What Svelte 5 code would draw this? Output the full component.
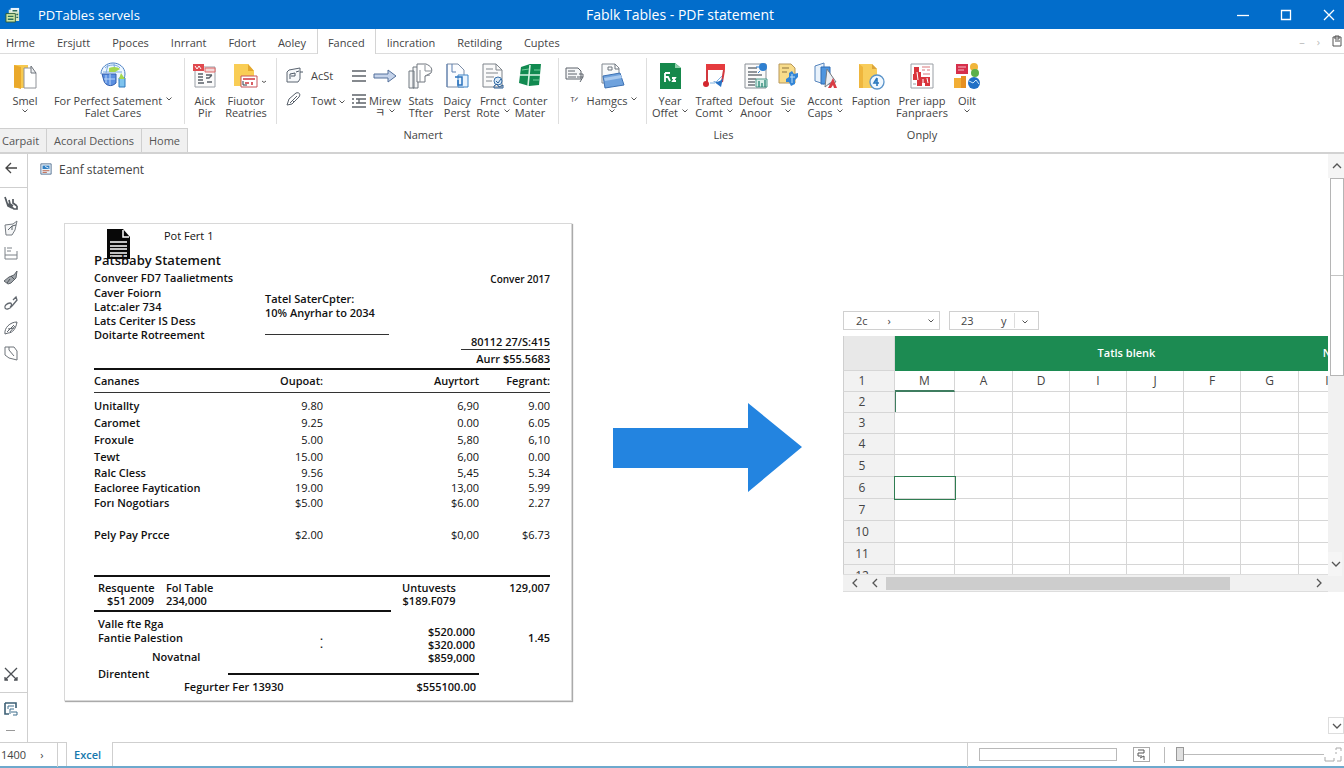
<script>
  const tabs = [
    "Hrme", "Ersjutt", "Ppoces", "Inrrant", "Fdort", "Aoley",
    "Fanced", "Iincration", "Retilding", "Cuptes",
  ];
  let activeTab = $state("Fanced");

  const icons = {
    app: `<path d="M4 3h9l2 2v10H4z" fill="#d9e8c8"/><path d="M6 1h9v4H6z" fill="#eaf4fb"/><path d="M1 7h10v9H1z" fill="#cfe6a4" stroke="#2b5b3c"/><path d="M3 10h6M3 13h6M8 4h5M12 8h2M12 11h2" stroke="#2d6f5a" stroke-width="1.4"/>`,
    folderPage: `<path d="M3 3h14v23H3z" fill="#f7c94f"/><path d="M3 3l7 2v22l-7-2z" fill="#eaa92b"/><path d="M13 6h7l5 5v15H13z" fill="#fff" stroke="#8f9298"/><path d="M20 4l5 7h-5z" fill="#eef0f2" stroke="#6f747c"/>`,
    cloud: `<path d="M2 12C2 5 8 1 14 1s12 4 12 11c0 4-2 7-4 8" fill="#eef7ff" stroke="#4a7fc4"/><path d="M6 6c4-4 12-4 15 0M4 10h19M9 3l-2 8M15 2l1 8" fill="none" stroke="#7dabde"/><path d="M10 6c5-2 9-1 11 1l-5 3h-6z" fill="#a4d84e"/><path d="M3 12h14v9c-5 5-11 2-12-2z" fill="#5b8fe0" stroke="#345fae"/><path d="M7 13v8M11 12v11M5 17h11" stroke="#b9d5f7"/><path d="M20 16h6v9h-6z" fill="#7ec3ee" stroke="#2e78bd"/><path d="M22 11l4 6h-6z" fill="#a4d84e"/>`,
    calendar: `<path d="M4 5h20v20H4z" fill="#fbfbfb" stroke="#999fa7"/><path d="M2 2h11v7H2z" fill="#e04a4f"/><path d="M4 4l2 3 2-3 2 3" stroke="#fff" fill="none"/><path d="M14 6h10v4H14z" fill="#f4d8d8" stroke="#d66"/><path d="M7 12h5M7 15h5M7 18h5M7 21h6M15 13h6M15 16h3l3-3M16 20h5" stroke="#5a6068" fill="none" stroke-width="1.3"/>`,
    folderCard: `<path d="M2 2h14l6 7v15H2z" fill="#f9cd55"/><path d="M16 2v7h6z" fill="#e3a72e"/><path d="M9 14h16v11H9z" fill="#fff" stroke="#c7555b"/><path d="M11 17h12M13 21h4M20 20v3" stroke="#d0363e" stroke-width="1.6"/><path d="M11 19v4h4" fill="none" stroke="#333c48"/><path d="M30 19l2 1.500 2-1.500" fill="none" stroke="#555"/>`,
    stamp: `<path d="M4 4l11-2v11l-2 3H2V6z" fill="#f6f8fa" stroke="#5b6470"/><path d="M5 13V8l5-1v3H6M11 6l3-1M15 6h3" fill="none" stroke="#4c5866"/>`,
    clip: `<path d="M2 14l2-6 7-6c3-1 5 1 3 4l-7 7-5 1zM5 12l7-7M7 9l2 2" fill="none" stroke="#59616b"/>`,
    lines: `<path d="M1 4h14M1 9h14M1 14h14" stroke="#5d6369" stroke-width="1.300"/>`,
    list: `<path d="M1 3h14M5 7h10M5 11h10M1 15h14M1 7h2M1 11h2M8 7v4" stroke="#5d6369" stroke-width="1.300"/>`,
    arrow: `<path d="M3 12h14V8l8 6-8 6v-4H3z" fill="#c5d3ea" stroke="#54709b"/>`,
    pages: `<path d="M2 9h5v17H2zM6 5h5v21H6z" fill="#f5f6f7" stroke="#717880"/><path d="M10 2h9c5 2 7 5 5 9l-6 3v6h-8z" fill="#fff" stroke="#70767e"/><path d="M18 3v6h7M18 14l5-1M13 20V8" fill="none" stroke="#8b9198"/>`,
    pageBlue: `<path d="M4 2h11l6 6v17H4z" fill="#fbfcfe" stroke="#7a8ca6"/><path d="M4 2v23M9 2v8h4" stroke="#5b7fb0" fill="none"/><path d="M15 13h10v12H15z" fill="#eaf4fd" stroke="#3c83c6"/><path d="M12 15h7v8h-4v-5" fill="none" stroke="#2a72bd" stroke-width="1.500"/>`,
    pageSeal: `<path d="M4 2h13l6 6v17H4z" fill="#fafafa" stroke="#7e848b"/><path d="M17 2v6h6M7 7h7M7 11h12M7 15h8M7 19h6" fill="none" stroke="#81878d"/><circle cx="19" cy="19" r="4" fill="#d7e9f8" stroke="#376fa9"/><path d="M15 24l3-2 2 3 4-2v3h-9zM17 19l2 2 3-4" fill="none" stroke="#2b5f98"/>`,
    flag: `<path d="M5 5l9-3h11l-2 21-10 1-10-3z" fill="#118a50"/><path d="M14 3l-2 21M4 13h20" stroke="#d6f3e2" stroke-width="1.600"/><path d="M18 8h6M17 18h6M6 8l7-1" stroke="#6fd09b"/>`,
    note: `<path d="M1 3h12l3 3v8H1z" fill="#f6f7f8" stroke="#5c636b"/><path d="M3 6h7M3 9h9M3 12h8M14 9h4v3l-3 5M12 12h6" stroke="#5c636b" fill="none"/>`,
    bluePage: `<path d="M4 2h13l4 4v15H4z" fill="#f9fafb" stroke="#80878f"/><path d="M10 5h4v3h-4zM17 2v5h4" fill="none" stroke="#6d747c"/><path d="M5 14l17-3 4 12-19 3z" fill="#6fa2dd" stroke="#3e72b4"/><path d="M6 16l17-3 1 3-17 3z" fill="#a9c9ee"/>`,
    excel: `<path d="M4 1h15l6 5v21H4z" fill="#15884b"/><path d="M19 1v5h6z" fill="#8fd0aa"/><path d="M9 11v9M9 11h5M9 15h3l2 4M16 16h3l-2 3h3" fill="none" stroke="#fff" stroke-width="1.800"/>`,
    music: `<path d="M6 2h19v6H6z" fill="#e53b3e"/><path d="M7 8v13M24 8l-2 12" stroke="#d2383e" stroke-width="2"/><circle cx="6" cy="22" r="3" fill="#d3262e"/><path d="M13 19c4 2 8 0 10-3l-2 9z" fill="#2872c5"/><path d="M10 21h5l7-7" fill="none" stroke="#7fb3e2"/>`,
    report: `<path d="M3 2h21v24H3z" fill="#fafafa" stroke="#8a9097"/><path d="M6 6h9M6 10h9M6 13h14M6 17h8M6 20h7M6 23h7" stroke="#6d747b" stroke-width="1.300"/><circle cx="21" cy="5" r="4" fill="#2e7fd0"/><path d="M17 5h-3M18 9l-2 2" stroke="#2e7fd0"/><path d="M14 17h11v8H14z" fill="#d9eee8" stroke="#4c9a8c"/><path d="M17 25v-6M20 25v-4M23 25v-7" stroke="#2f8c7a" stroke-width="1.400"/>`,
    globeDoc: `<path d="M5 2h12l4 4v15H5z" fill="#f8dc8a" stroke="#b7975a"/><path d="M8 6h7M8 10h5" stroke="#8b7340"/><path d="M15 11l3-2 2 3 4-1v4l-3 3v4l-4 2-2-4h-3v-3l3-2z" fill="#3385d6"/><path d="M16 15h5M18 12v9" stroke="#bfe0f8"/>`,
    cursor: `<path d="M4 4l9-3v21l-9-3z" fill="#e9f2fb" stroke="#5685bd"/><path d="M10 5h9v17h-9z" fill="#4e95df" stroke="#2f6db4"/><path d="M16 7l9 13-6 1-5 4z" fill="#eceff3" stroke="#747b83"/><path d="M17 26l5-10 4 10h-3l-1-3-2 3z" fill="#d93c44"/>`,
    folderClock: `<path d="M2 2h13l5 5v19H2z" fill="#f8cd5c"/><path d="M15 2v5h5z" fill="#dca53a"/><path d="M2 2l4 3v21H2z" fill="#efb63d"/><circle cx="20" cy="20" r="7" fill="#f1f8fe" stroke="#5a93c9" stroke-width="1.300"/><path d="M20 16l-3 5h5M20 16v8" stroke="#2b78bd" fill="none" stroke-width="1.600"/>`,
    redReport: `<path d="M3 2h22v24H3z" fill="#fff" stroke="#9a9fa5"/><path d="M6 5h5v5h2v5h9v9h-5v-3h-3v3H9v-6H5v-6h1z" fill="#d9343c"/><path d="M14 5h8M14 8h3M19 8h3M15 12h7" stroke="#db767b"/><path d="M9 10l1 8M15 17v5M19 16l1 5" stroke="#fff"/><path d="M5 22h3" stroke="#9a9fa5"/>`,
    tiles: `<path d="M3 2h12v10H3z" fill="#d62f4b"/><path d="M5 5h8M5 8h6" stroke="#f6bcc6"/><circle cx="21" cy="5" r="4" fill="#f1b53a"/><circle cx="22" cy="11" r="4" fill="#5cb04b"/><path d="M1 16h7v10H1z" fill="#f2ae35"/><path d="M8 14h5v12H8z" fill="#e69022"/><circle cx="21" cy="21" r="6" fill="#1f6fc6"/><path d="M16 19l4 2 3-3 3 4" stroke="#c9e4fb" fill="none"/>`,
    docSmall: `<path d="M1 1h12v12H1z" fill="#e6f0f8" stroke="#4d6b8a"/><path d="M3 3h8v4H3z" fill="#2f7fc4"/><path d="M3 9h8M3 11h5" stroke="#b9563a"/><path d="M6 4l4 2" stroke="#fff"/>`,
    branch: `<path d="M2 2l2 6 3 3 4 3h3v-3M6 5l1 4 3 2M10 4v4l4 3M3 5l2 6 4 2" fill="none" stroke="#555b61" stroke-width="1.700"/>`,
    send: `<path d="M2 5l8-1 4-3-2 9-3 5H3z" fill="#f5f6f7" stroke="#767c82"/><path d="M5 10l4-4v4M9 6l4-1" fill="none" stroke="#5d646b"/>`,
    tray: `<path d="M2 2v12h12V6M2 10h12M4 3h5M4 6h4" fill="none" stroke="#7c8288"/>`,
    tag: `<path d="M1 11l5-4 5-2 3-4-1 7-5 5-3 1z" fill="#a1a6ab" stroke="#5f656b"/><path d="M4 13l3-4M8 6l4 4" stroke="#50565c"/>`,
    link: `<path d="M10 5l3-3 1 3-5 6c-2 3-6 4-7 2s2-5 5-5c2 0 2 3 0 4" fill="none" stroke="#62686f" stroke-width="1.300"/>`,
    leaf: `<path d="M2 14c-1-6 5-12 12-12-1 6-4 11-9 11zM4 12l7-7M7 12l5-6M5 9l6-1" fill="none" stroke="#62686f"/>`,
    sheet: `<path d="M2 2h9l3 4v9l-8-2-4-3zM6 2v3l5 6" fill="none" stroke="#6f757b"/>`,
    cut: `<path d="M2 2l12 12M14 2L2 14M2 11v3h3M11 14h3v-3" fill="none" stroke="#4b4f54" stroke-width="1.300"/>`,
    save: `<path d="M2 2h11v5M2 2v11h4" fill="none" stroke="#3d6075" stroke-width="1.600"/><path d="M5 8V5h6M7 13V8h4M8 11h6v3h-4" fill="none" stroke="#3f6f8d"/>`,
  };

  // carets holds the indexes of the label lines that end in a drop mark
  const groups = [
    [
      { icon: "folderPage", lines: ["Smel", ""], carets: [1], w: 50 },
      { icon: "cloud", lines: ["For Perfect Satement", "Falet Cares"], carets: [0], w: 126 },
    ],
    [
      { icon: "calendar", lines: ["Aick", "Pir"], carets: [], w: 40 },
      { icon: "folderCard", lines: ["Fiuotor", "Reatries"], carets: [], w: 42 },
    ],
    [
      { icon: "arrow", lines: ["Mirew", "ㅋ"], carets: [1], w: 36 },
      { icon: "pages", lines: ["Stats", "Tfter"], carets: [], w: 36 },
      { icon: "pageBlue", lines: ["Daicy", "Perst"], carets: [], w: 36 },
      { icon: "pageSeal", lines: ["Frnct", "Rote"], carets: [1], w: 36 },
      { icon: "flag", lines: ["Conter", "Mater"], carets: [], w: 38 },
    ],
    [{ icon: "bluePage", lines: ["Hamgcs", ""], carets: [0, 1], w: 54 }],
    [
      { icon: "excel", lines: ["Year", "Offet"], carets: [1], w: 46 },
      { icon: "music", lines: ["Trafted", "Comt"], carets: [1], w: 42 },
      { icon: "report", lines: ["Defout", "Anoor"], carets: [], w: 42 },
      { icon: "globeDoc", lines: ["Sie", ""], carets: [1], w: 22 },
    ],
    [
      { icon: "cursor", lines: ["Accont", "Caps"], carets: [1], w: 50 },
      { icon: "folderClock", lines: ["Faption", ""], carets: [], w: 42 },
      { icon: "redReport", lines: ["Prer iapp", "Fanpraers"], carets: [], w: 60 },
      { icon: "tiles", lines: ["Oilt", ""], carets: [1], w: 30 },
    ],
  ];

  const railTools = ["branch", "send", "tray", "tag", "link", "leaf", "sheet"];

  const charges = [
    ["Unitallty", "9.80", "6,90", "9.00"],
    ["Caromet", "9.25", "0.00", "6.05"],
    ["Froxule", "5.00", "5,80", "6,10"],
    ["Tewt", "15.00", "6,00", "0.00"],
    ["Ralc Cless", "9.56", "5,45", "5.34"],
    ["Eacloree Faytication", "19.00", "13,00", "5.99"],
    ["Forı Nogotiars", "$5.00", "$6.00", "2.27"],
  ];

  const columns = ["M", "A", "D", "I", "J", "F", "G", "I"];
  const rows = ["2", "3", "4", "5", "6", "7", "10", "11", "12"];
  let selected = $state("6M");
  let zoom = $state(0);
</script>

{#snippet icon(name, size, box = size)}
  <svg width={size} height={size} viewBox="0 0 {box} {box}" aria-hidden="true">
    {@html icons[name]}
  </svg>
{/snippet}

{#snippet caret()}
  <svg class="caret" width="6" height="4" viewBox="0 0 6 4" aria-hidden="true">
    <path d="M0.500 0.500L3 3L5.500 0.500" fill="none" stroke="#555" />
  </svg>
{/snippet}

{#snippet chevron(d)}
  <svg width="12" height="12" viewBox="0 0 12 12" aria-hidden="true">
    <path {d} fill="none" stroke="#555" stroke-width="1.3" />
  </svg>
{/snippet}

<div class="window">
  <header class="titlebar">
    <div class="brand">{@render icon("app", 16, 17)}<span>PDTables servels</span></div>
    <h1>Fablk Tables - PDF statement</h1>
    <div class="controls">
      <button aria-label="Minimize"><svg width="12" height="12"><path d="M0 6.500h12" /></svg></button>
      <button aria-label="Maximize"><svg width="12" height="12"><path d="M1.500 1.500h9v9h-9z" /></svg></button>
      <button aria-label="Close"><svg width="12" height="12"><path d="M1 1l10 10M11 1L1 11" /></svg></button>
    </div>
  </header>

  <nav class="tabs">
    {#each tabs as tab (tab)}
      <button class="tab" class:active={tab === activeTab} onclick={() => (activeTab = tab)}>
        {tab}
      </button>
    {/each}
    <div class="tabs-end">
      <span>–</span><span>›</span>
      <button aria-label="Clipboard">
        <svg width="10" height="12" viewBox="0 0 10 12"><path d="M1 2h8v9H1zM3 1h4v3H3zM3 6h5" fill="none" stroke="#555" /></svg>
      </button>
    </div>
  </nav>

  <section class="ribbon">
    {#each groups as tools, g}
      <div class="group">
        {#if g === 2}
          <div class="mini">
            {@render icon("stamp", 18)}
            <button>AcSt</button>
            {@render icon("lines", 16)}
            {@render icon("clip", 18)}
            <button>Towt {@render caret()}</button>
            {@render icon("list", 16)}
          </div>
        {:else if g === 3}
          <div class="side">
            {@render icon("note", 20)}
            <button>ᵀᐟ</button>
          </div>
        {/if}
        {#each tools as tool}
          <button class="tool" style="width: {tool.w}px">
            {@render icon(tool.icon, 28)}
            {#each tool.lines as line, i}
              <span>{line} {#if tool.carets.includes(i)}{@render caret()}{/if}</span>
            {/each}
          </button>
        {/each}
      </div>
    {/each}
    <div class="quick">
      <button>Carpait</button>
      <button>Acoral Dections</button>
      <button>Home</button>
    </div>
    <p class="group-name third">Namert</p>
    <p class="group-name fifth">Lies</p>
    <p class="group-name sixth">Onply</p>
  </section>

  <main class="workspace">
    <aside class="rail">
      <button class="back" aria-label="Back">
        <svg width="12" height="12"><path d="M12 6H1M6 1L1 6l5 5" fill="none" stroke="#444" stroke-width="1.3" /></svg>
      </button>
      <div class="rail-tools">
        {#each railTools as name (name)}
          <button aria-label={name}>{@render icon(name, 16)}</button>
        {/each}
      </div>
      <button class="cut" aria-label="Cut">{@render icon("cut", 16)}</button>
      <div class="rail-end">
        <button aria-label="Save">{@render icon("save", 16)}</button>
        <span></span>
      </div>
    </aside>

    <div class="canvas">
      <h2>{@render icon("docSmall", 12, 14)} Eanf statement</h2>
      <div class="stage">
        <article class="paper">
          <div class="part">
            <svg width="26" height="32" viewBox="0 0 26 32" aria-hidden="true">
              <path d="M1 1h16l7 8v22H1z" fill="#080808" />
              <path d="M17 2v7h6" fill="none" stroke="#fff" stroke-width="1.500" />
              <path d="M4 14h17M4 18h17M4 21h17M4 25h17M4 28h17" stroke="#fff" stroke-width="1.300" />
            </svg>
            <span>Pot Fert 1</span>
          </div>
          <h3>Patsbaby Statement</h3>
          <div class="letterhead">
            <div>
              <p class="wide">Conveer FD7 Taalietments</p>
              <p>Caver Foiorn</p>
              <p>Latc:aler 734</p>
              <p>Lats Ceriter IS Dess</p>
              <p>Doitarte Rotreement</p>
            </div>
            <div class="period">
              <p>Tatel SaterCpter:</p>
              <p>10% Anyrhar to 2034</p>
            </div>
            <div class="account">
              <p class="date">Conver 2017</p>
              <p class="number">80112 27/S:415</p>
              <p>Aurr $55.5683</p>
            </div>
          </div>
          <table class="charges">
            <thead>
              <tr><th>Cananes</th><th>Oupoat:</th><th>Auyrtort</th><th>Fegrant:</th></tr>
            </thead>
            <tbody>
              {#each charges as [name, ...amounts], i (name)}
                <tr class:tight={i > 3}>
                  <th>{name}</th>
                  {#each amounts as amount}<td>{amount}</td>{/each}
                </tr>
              {/each}
            </tbody>
            <tfoot>
              <tr><th>Pely Pay Prcce</th><td>$2.00</td><td>$0,00</td><td>$6.73</td></tr>
            </tfoot>
          </table>
          <div class="summary">
            <p class="right">Resquente<br />$51 2009</p>
            <p>Fol Table<br />234,000</p>
            <p class="center">Untuvests<br />$189.F079</p>
            <p class="right">129,007</p>
          </div>
          <hr class="short" />
          <div class="totals">
            <div>
              <p>Valle fte Rga</p>
              <p>Fantie Palestion</p>
              <p class="inset">Novatnal</p>
            </div>
            <div class="dots">.<br />.</div>
            <div class="sums">
              <p>$520.000</p>
              <p>$320.000</p>
              <p>$859,000</p>
            </div>
            <div class="rate">1.45</div>
          </div>
          <div class="closing"><span>Direntent</span><hr /></div>
          <div class="final"><span>Fegurter Fer 13930</span><span>$555100.00</span></div>
        </article>

        <svg class="arrow" viewBox="0 0 190 90" aria-hidden="true">
          <path d="M0 25h135V0l54 44-54 45V65H0z" fill="#2384e0" />
        </svg>

        <section class="sheet">
          <div class="boxes">
            <label class="box name-box">
              <select aria-label="Cell name"><option>2c &nbsp; &nbsp; &nbsp; ›</option></select>
              {@render caret()}
            </label>
            <div class="box value-box">
              <input aria-label="Cell value" value="23" />
              <span>y</span>
              <button aria-label="Expand">{@render caret()}</button>
            </div>
          </div>
          <div class="grid">
            <table>
              <colgroup>
                <col class="c-index" /><col class="c-first" /><col class="c-wide" />
                <col /><col /><col /><col /><col class="c-wide" /><col />
              </colgroup>
              <thead>
                <tr class="band"><th></th><td></td><th colspan="6">Tatls blenk</th><th>N</th></tr>
                <tr class="letters">
                  <th>1</th>
                  {#each columns as letter}<td>{letter}</td>{/each}
                </tr>
              </thead>
              <tbody>
                {#each rows as row, r (row)}
                  <tr class:tall={r > 2}>
                    <th>{row}</th>
                    {#each columns as letter, c}
                      <td
                        class:start={r === 0 && c === 0}
                        class:selected={c < 7 && selected === row + letter}
                        onclick={() => (selected = row + letter)}
                      ></td>
                    {/each}
                  </tr>
                {/each}
              </tbody>
            </table>
          </div>
          <div class="hscroll">
            <button aria-label="First">{@render chevron("M8 2L4 6l4 4")}</button>
            <button aria-label="Left">{@render chevron("M8 2L4 6l4 4")}</button>
            <div class="track"><div></div></div>
            <button aria-label="Right">{@render chevron("M4 2l4 4-4 4")}</button>
          </div>
        </section>
      </div>
    </div>

    <div class="vscroll">
      <button aria-label="Scroll up">{@render chevron("M2 8l4-4 4 4")}</button>
      <div class="thumb"><span></span></div>
      <div class="lane"><button aria-label="Next">{@render chevron("M2 4l4 4 4-4")}</button></div>
      <button class="down" aria-label="Scroll down">{@render chevron("M2 4l4 4 4-4")}</button>
    </div>
  </main>

  <footer class="status">
    <div class="page"><span>1400</span><span>›</span></div>
    <button class="sheet-tab">Excel</button>
    <div class="tools">
      <input class="find" aria-label="Find" />
      <button class="mode" aria-label="View mode">
        <svg width="15" height="13" viewBox="0 0 15 13"><path d="M4 2h6v3H4M4 5v3h4M6 10l4-2v4" fill="none" stroke="#555" /></svg>
      </button>
      <input class="zoom" type="range" min="0" max="100" bind:value={zoom} aria-label="Zoom" />
      <svg width="20" height="16" viewBox="0 0 20 16" aria-hidden="true">
        <path d="M1 10v4h9v-3M12 3V1h5v3M12 7V5M17 9v5h-4" fill="none" stroke="#aaa" />
      </svg>
    </div>
  </footer>
</div>

<style>
  :global(body) {
    margin: 0;
    background: #fff;
  }

  .window {
    display: flex;
    flex-direction: column;
    min-height: 100vh;
    overflow: hidden;
    font-family: "Open Sans", "Noto Sans", "Noto Sans CJK KR", sans-serif;
    font-size: 12px;
    color: #444;
  }

  .window * {
    box-sizing: border-box;
  }

  button,
  input,
  select {
    font: inherit;
    color: inherit;
    border: 0;
    background: none;
    padding: 0;
    margin: 0;
  }

  h1,
  h2,
  h3,
  p {
    margin: 0;
    font-weight: inherit;
  }

  hr {
    height: 2px;
    margin: 0;
    border: 0;
    background: #111;
  }

  svg {
    display: block;
    flex: none;
    overflow: visible;
  }

  .caret {
    display: inline-block;
    vertical-align: middle;
  }

  .titlebar {
    display: grid;
    grid-template-columns: 1fr auto 1fr;
    align-items: center;
    height: 29px;
    padding: 0 9px 0 5px;
    background: #026dcb;
    color: #fff;
  }

  .brand {
    display: flex;
    align-items: center;
    gap: 17px;
    font-size: 13px;
  }

  h1 {
    font-size: 14px;
    padding-left: 20px;
  }

  .controls {
    display: flex;
    justify-content: flex-end;
    gap: 31px;
  }

  .controls path {
    fill: none;
    stroke: #fff;
    stroke-width: 1.3;
  }

  .tabs {
    display: flex;
    height: 25px;
    border-bottom: 1px solid #dcdcdc;
    font-size: 11px;
  }

  .tab {
    height: 25px;
    padding: 0 10px;
    border: solid transparent;
    border-width: 0 1px;
    line-height: 28px;
  }

  .tab:first-child {
    padding-left: 5px;
  }

  .tab.active {
    background: #fff;
    border-color: #d4d4d4;
  }

  .tabs-end {
    display: flex;
    align-items: center;
    gap: 12px;
    margin-left: auto;
    padding-right: 2px;
    color: #bbb;
  }

  .ribbon {
    display: grid;
    grid-template-columns: 185px 92px 282px 88px 153px 244px 1fr;
    grid-template-rows: 74px 24px;
    border-bottom: 2px solid #d2d2d2;
    font-size: 11px;
  }

  .group {
    display: flex;
    height: 66px;
    margin-top: 4px;
    padding-top: 4px;
    border-right: 1px solid #dedede;
  }

  .group:nth-child(n + 5) {
    border: 0;
  }

  .tool {
    display: flex;
    flex-direction: column;
    align-items: center;
    line-height: 12px;
    white-space: nowrap;
  }

  .tool svg:first-child {
    margin-bottom: 5px;
  }

  .tool span {
    min-height: 12px;
    display: flex;
    align-items: center;
    gap: 4px;
  }

  .mini {
    display: grid;
    grid-template-columns: 18px 32px 16px;
    grid-template-rows: 26px 24px;
    column-gap: 8px;
    align-items: center;
    padding-left: 8px;
    height: 50px;
  }

  .mini button {
    text-align: left;
    white-space: nowrap;
  }

  .side {
    display: grid;
    grid-template-rows: 26px 24px;
    place-items: center;
    height: 50px;
    padding-left: 6px;
  }

  .quick {
    grid-column: 1 / 3;
    justify-self: start;
    display: flex;
    background: #f0f0f0;
    border: solid #cfcfcf;
    border-width: 1px 1px 0 0;
    color: #555;
  }

  .quick button {
    padding: 0 7px;
  }

  .quick button:first-child {
    padding-left: 2px;
  }

  .quick button + button {
    border-left: 1px solid #cfcfcf;
  }

  .group-name {
    text-align: center;
    line-height: 14px;
  }

  .third {
    grid-column: 3;
    padding-left: 10px;
  }

  .fifth {
    grid-column: 5;
  }

  .sixth {
    grid-column: 6;
  }

  .workspace {
    flex: 1;
    display: flex;
  }

  .rail {
    display: flex;
    flex-direction: column;
    width: 28px;
    border-right: 1px solid #cfcfcf;
  }

  .rail button {
    display: grid;
    place-items: center;
    width: 22px;
  }

  .rail .back {
    width: 100%;
    height: 34px;
    padding: 0 6px 5px 0;
    border-bottom: 1px solid #cfcfcf;
  }

  .rail-tools button {
    height: 25px;
  }

  .rail-tools {
    padding-top: 2px;
  }

  .rail .cut {
    height: 36px;
    margin-top: auto;
  }

  .rail-end {
    height: 50px;
    border-top: 1px solid #cfcfcf;
  }

  .rail-end button {
    height: 32px;
  }

  .rail-end span {
    display: block;
    width: 9px;
    height: 1px;
    margin: 5px 6px;
    background: #999;
  }

  .canvas {
    flex: 1;
    min-width: 0;
    padding: 5px 0 0 12px;
  }

  h2 {
    display: flex;
    align-items: center;
    gap: 7px;
    height: 20px;
    font-size: 12px;
  }

  .stage {
    display: flex;
    align-items: flex-start;
    padding: 44px 0 0 24px;
  }

  .paper {
    flex: none;
    width: 508px;
    padding: 4px 21px 6px 29px;
    border: 1px solid #d8d8d8;
    box-shadow: 1px 1px 1px #aaa;
    font-size: 11px;
    font-weight: 600;
    line-height: 14px;
    color: #111;
  }

  .part {
    display: flex;
    gap: 32px;
    height: 24px;
    padding-left: 12px;
    font-weight: 400;
    line-height: 16px;
  }

  h3 {
    font-size: 13px;
    line-height: 16px;
  }

  .letterhead {
    display: grid;
    grid-template-columns: 171px 124px 1fr;
    height: 102px;
    padding-top: 2px;
    border-bottom: 2px solid #111;
    white-space: nowrap;
  }

  .letterhead .wide {
    line-height: 16px;
  }

  .period {
    height: 65px;
    padding-top: 22px;
    border-bottom: 1px solid #333;
  }

  .account {
    text-align: right;
  }

  .account .date {
    height: 65px;
    font-size: 10px;
    line-height: 18px;
  }

  .account .number {
    display: inline-block;
    padding-left: 10px;
    border-bottom: 1px solid #333;
  }

  .account p:last-child {
    line-height: 18px;
  }

  .charges {
    width: 100%;
    border-collapse: collapse;
    table-layout: fixed;
  }

  .charges th {
    padding: 0;
    font-weight: 600;
    text-align: left;
    white-space: nowrap;
  }

  .charges td {
    padding: 0;
    font-weight: 400;
    text-align: right;
  }

  .charges thead th {
    height: 22px;
    width: 156px;
    border-bottom: 1px solid #333;
    text-align: right;
  }

  .charges thead th:first-child {
    width: 115px;
    text-align: left;
  }

  .charges thead th:nth-child(2) {
    width: 114px;
  }

  .charges thead th:last-child {
    width: 71px;
  }

  .charges tbody tr {
    height: 17px;
  }

  .charges tbody tr.tight {
    height: 15px;
  }

  .charges tbody::before {
    content: "";
    display: block;
    height: 5px;
  }

  .charges tfoot tr {
    height: 48px;
  }

  .summary {
    display: grid;
    grid-template-columns: 56px 1fr 64px 77px;
    column-gap: 12px;
    margin-top: 16px;
    padding: 4px 0 3px 4px;
    border-top: 2px solid #111;
    line-height: 13px;
  }

  .right {
    text-align: right;
  }

  .center {
    text-align: center;
  }

  .short {
    width: 297px;
  }

  .totals {
    display: grid;
    grid-template-columns: 222px 20px 1fr 75px;
    padding: 5px 0 0 4px;
  }

  .totals .inset {
    padding: 5px 0 4px 54px;
  }

  .dots {
    line-height: 8px;
    padding-top: 15px;
  }

  .sums {
    padding-top: 8px;
    line-height: 13px;
    text-align: right;
  }

  .rate {
    text-align: right;
    line-height: 42px;
  }

  .closing {
    display: flex;
    align-items: center;
    justify-content: space-between;
    padding: 0 71px 0 4px;
    line-height: 12px;
  }

  .closing hr {
    width: 251px;
  }

  .final {
    display: flex;
    justify-content: space-between;
    margin: 0 74px 0 90px;
  }

  .arrow {
    flex: 1;
    min-width: 0;
    margin: 180px 40px 0 41px;
  }

  .sheet {
    flex: none;
    width: 485px;
    margin-top: 88px;
  }

  .boxes {
    display: flex;
    gap: 9px;
    margin-bottom: 6px;
    font-size: 11px;
  }

  .box {
    display: flex;
    align-items: center;
    height: 19px;
    border: 1px solid #d0d0d0;
  }

  .name-box {
    width: 97px;
    padding: 0 5px 0 12px;
  }

  .name-box select {
    flex: 1;
    appearance: none;
  }

  .value-box {
    width: 90px;
    padding-left: 11px;
  }

  .value-box input {
    width: 40px;
  }

  .value-box button {
    margin-left: 7px;
    padding-left: 7px;
    border-left: 1px solid #ddd;
  }

  .grid {
    height: 238px;
    overflow: hidden;
  }

  .grid table {
    width: 513px;
    border-collapse: separate;
    border-spacing: 0;
    table-layout: fixed;
  }

  .grid col {
    width: 57px;
  }

  .grid .c-index {
    width: 52px;
  }

  .grid .c-first {
    width: 60px;
  }

  .grid .c-wide {
    width: 58px;
  }

  .grid th,
  .grid td {
    padding: 0;
    border: solid #d6d6d6;
    border-width: 0 1px 1px 0;
    font-weight: 400;
    text-align: center;
    line-height: 16px;
  }

  .grid tr {
    height: 21px;
  }

  .grid tr.tall {
    height: 22px;
  }

  .grid th:first-child {
    padding-right: 14px;
    background: #f2f2f2;
    border-left: 1px solid #cfcfcf;
  }

  .grid .band {
    height: 35px;
  }

  .grid .band td,
  .grid .band td ~ th {
    background: #1c8b52;
    border-color: #1c8b52;
    color: #fff;
    font-weight: 600;
    font-size: 11px;
  }

  .grid .band th:first-child {
    background: #e8e8e8;
  }

  .grid .letters td:nth-child(2) {
    border-bottom: 2px solid #3f7d60;
  }

  .grid td.start {
    box-shadow: inset 1px 0 #3f7d60;
  }

  .grid td.selected {
    outline: 1px solid #2f7d52;
  }

  .hscroll {
    display: flex;
    align-items: center;
    height: 18px;
    padding: 0 3px 0 6px;
    background: #f1f1f1;
    border: solid #ddd;
    border-width: 1px 0;
  }

  .hscroll button + button {
    margin-left: 8px;
  }

  .track {
    flex: 1;
    padding: 0 83px 0 5px;
  }

  .track div {
    height: 13px;
    background: #cdcdcd;
  }

  .vscroll {
    display: flex;
    flex-direction: column;
    width: 16px;
  }

  .vscroll button {
    display: grid;
    place-items: center;
    height: 24px;
    padding-left: 2px;
    background: #f5f5f5;
  }

  .thumb {
    height: 198px;
    margin-left: 2px;
    padding-top: 96px;
    border: 1px solid #b5b5b5;
    background: #fff;
  }

  .thumb span {
    display: block;
    height: 1px;
    background: #c4c4c4;
  }

  .lane {
    height: 216px;
    padding-top: 176px;
    background: #f1f1f1;
  }

  .vscroll .down {
    height: 17px;
    margin: auto 0 8px;
    border: 1px solid #ddd;
    background: #fff;
  }

  .status {
    display: flex;
    height: 26px;
    border-bottom: 2px solid #6ea9cd;
    font-size: 11px;
  }

  .page {
    display: flex;
    align-items: center;
    gap: 14px;
    width: 67px;
    padding-left: 1px;
    border: solid #cfcfcf;
    border-width: 1px 1px 0 0;
  }

  .page::after {
    content: "";
    height: 24px;
    border-left: 1px solid #cfcfcf;
  }

  .sheet-tab {
    padding: 0 11px 0 7px;
    border-right: 1px solid #cfcfcf;
    font-weight: 600;
    color: #1779ae;
  }

  .tools {
    flex: 1;
    display: flex;
    align-items: center;
    justify-content: flex-end;
    border-top: 1px solid #cfcfcf;
  }

  .tools::before {
    content: "";
    height: 24px;
    margin-right: 11px;
    border-left: 1px solid #cfcfcf;
  }

  .find {
    width: 138px;
    height: 13px;
    border: 1px solid #b9b9b9;
    background: #fff;
  }

  .mode {
    margin: 0 14px 0 16px;
    border: 1px solid #aaa;
  }

  .zoom {
    appearance: none;
    width: 160px;
    height: 16px;
    padding-left: 11px;
    border-left: 1px solid #bbb;
  }

  .zoom::-webkit-slider-runnable-track {
    height: 1px;
    background: #bbb;
  }

  .zoom::-webkit-slider-thumb {
    appearance: none;
    width: 8px;
    height: 14px;
    margin-top: -7px;
    border: 1px solid #999;
    background: #e0e0e0;
  }
</style>
